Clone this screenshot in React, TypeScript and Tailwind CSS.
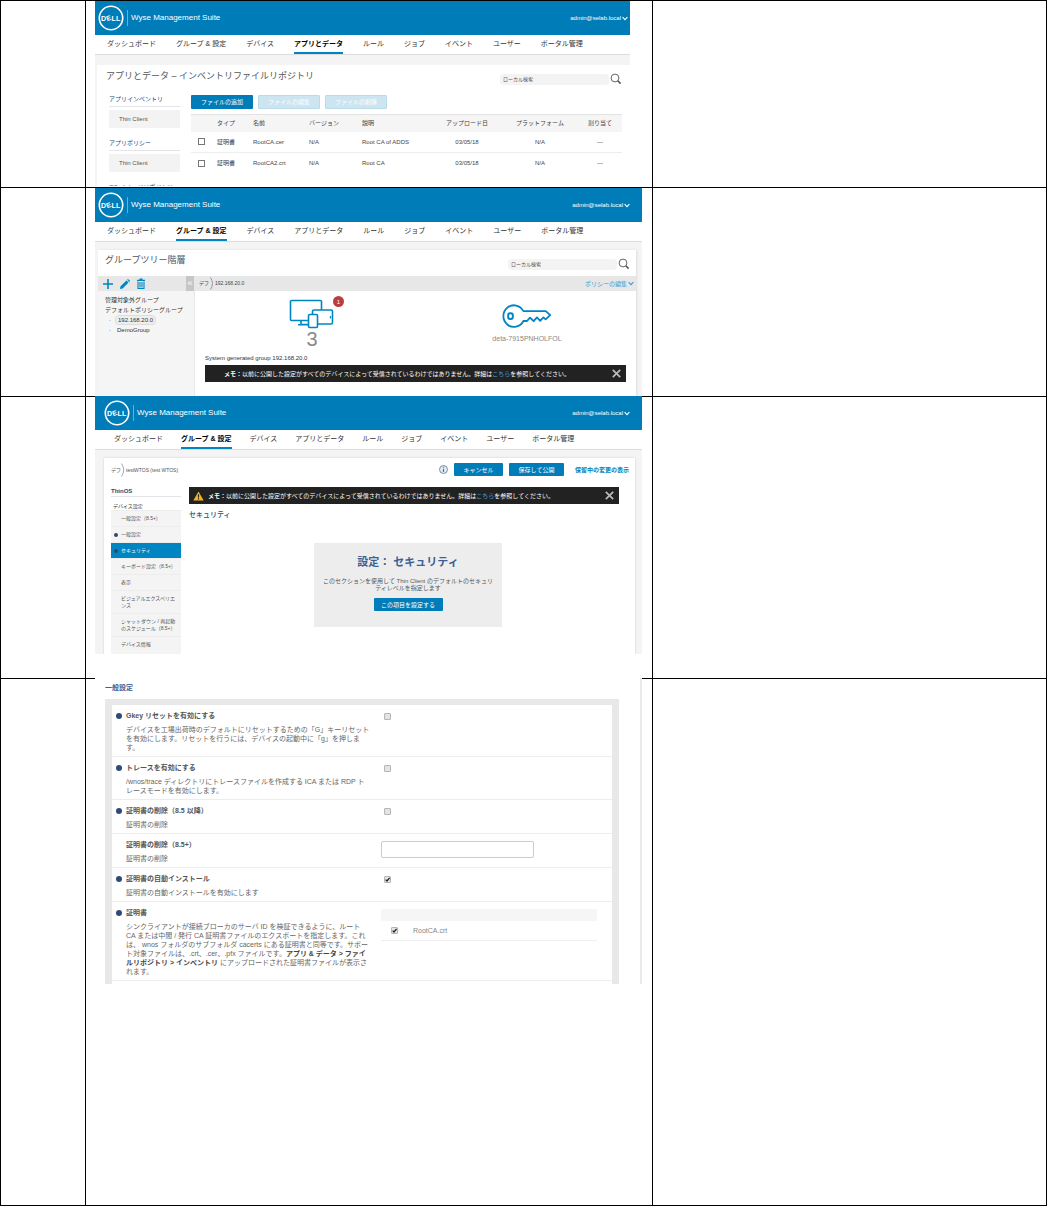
import { useState, type ReactNode } from 'react';
import clsx from 'clsx';

const NAV_ITEMS = [
  'ダッシュボード',
  'グループ & 設定',
  'デバイス',
  'アプリとデータ',
  'ルール',
  'ジョブ',
  'イベント',
  'ユーザー',
  'ポータル管理',
];

const FILES = [
  { name: 'RootCA.cer', description: 'Root CA of ADDS' },
  { name: 'RootCA2.crt', description: 'Root CA' },
];

const SECTIONS = [
  { label: '一般設定（8.5+）' },
  { label: '一般設定', dot: true },
  { label: 'セキュリティ', dot: true, active: true },
  { label: 'キーボード設定（8.5+）' },
  { label: '表示' },
  { label: 'ビジュアルエクスペリエンス' },
  { label: 'シャットダウン / 再起動のスケジュール（8.5+）' },
  { label: 'デバイス情報' },
];

function DellLogo() {
  return (
    <svg width="26" height="26" viewBox="0 0 26 26" fill="none" className="shrink-0">
      <circle cx="13" cy="13" r="11.7" stroke="#fff" strokeWidth="1.6" />
      <g fill="#fff" fontFamily="Liberation Sans, sans-serif" fontWeight="bold" fontSize="7">
        <text x="3" y="15.5">D</text>
        <text x="8.2" y="15.5" transform="rotate(-20 10.7 13)">E</text>
        <text x="13.6" y="15.5">L</text>
        <text x="18" y="15.5">L</text>
      </g>
    </svg>
  );
}

function Chevron({ className }: { className?: string }) {
  return (
    <svg width="6" height="5" viewBox="0 0 6 5" fill="none" className={className}>
      <path d="M0.6 1.2 L3 3.6 L5.4 1.2" stroke="currentColor" strokeWidth="1.1" />
    </svg>
  );
}

function TopBar({ active, wide = true, indent = false }: { active: string; wide?: boolean; indent?: boolean }) {
  return (
    <>
      <header
        className={clsx(
          'flex h-[34px] shrink-0 items-center justify-between bg-[#007db8] text-white',
          indent ? 'pl-[9px]' : 'pl-[3px]',
          wide ? 'pr-3' : 'pr-[2px]'
        )}
      >
        <div className="flex items-center">
          <DellLogo />
          <span className="ml-[3px] h-4 w-px bg-white/40" />
          <span className="ml-[3px] text-[8px] leading-none">Wyse Management Suite</span>
        </div>
        <button className="flex items-center gap-px text-[6px] leading-none">
          admin@selab.local <Chevron />
        </button>
      </header>
      <nav
        className={clsx(
          'flex h-5 shrink-0 border-b border-[#dcdcdc] bg-white text-[7px] leading-none whitespace-nowrap text-[#333]',
          indent ? 'gap-[18px] pl-[19px]' : 'gap-5 pl-3'
        )}
      >
        {NAV_ITEMS.map((item) => (
          <a
            key={item}
            href="#"
            className={clsx(
              'flex items-center border-b-2',
              item === active ? 'border-[#0085c3] font-bold text-black' : 'border-transparent'
            )}
          >
            {item}
          </a>
        ))}
      </nav>
    </>
  );
}

function SearchField() {
  return (
    <div className="flex items-center gap-px">
      <input
        type="search"
        aria-label="ローカル検索"
        placeholder="ローカル検索"
        className="h-[11px] w-[109px] rounded-sm bg-[#f3f3f3] px-[3px] text-[5px] leading-none placeholder:text-[#555]"
      />
      <svg width="12" height="12" viewBox="0 0 12 12" fill="none" stroke="#555" className="shrink-0">
        <circle cx="5" cy="5" r="3.9" strokeWidth="0.9" />
        <path d="M7.8 7.8 L10.6 10.6" strokeWidth="1.6" />
      </svg>
    </div>
  );
}

function Button({ children, disabled = false, className }: { children: ReactNode; disabled?: boolean; className?: string }) {
  return (
    <button
      disabled={disabled}
      className={clsx(
        'flex items-center justify-center rounded-[1px] text-[6px] leading-none text-white',
        disabled ? 'border border-[#b9dbea] bg-[#cce5f1]' : 'bg-[#007db8]',
        className
      )}
    >
      {children}
    </button>
  );
}

function Tick({ id, defaultChecked = false }: { id: string; defaultChecked?: boolean }) {
  const [checked, setChecked] = useState(defaultChecked);
  return (
    <span className="relative flex size-[7px]">
      <input
        id={id}
        type="checkbox"
        checked={checked}
        onChange={(e) => setChecked(e.target.checked)}
        className="size-[7px] appearance-none rounded-[1px] border border-[#b5b5b5] bg-[#e4e4e4]"
      />
      {checked && (
        <svg viewBox="0 0 7 7" fill="none" className="pointer-events-none absolute inset-0">
          <path d="M1.6 3.6 L3 5 L5.6 1.8" stroke="#222" strokeWidth="1.3" />
        </svg>
      )}
    </span>
  );
}

function Notice({ warning = false }: { warning?: boolean }) {
  return (
    <div className="flex h-[17px] items-center bg-[#222] pr-[5px] pl-1 text-[6px] leading-none whitespace-nowrap text-white">
      <span className="w-[15px]">
        {warning && (
          <svg width="11" height="10" viewBox="0 0 11 10">
            <path d="M5.5 0.4 L10.7 9.6 H0.3 Z" fill="#f4b223" />
            <path d="M5.5 3.2 V6.4 M5.5 7.2 V8.5" stroke="#222" strokeWidth="1.1" />
          </svg>
        )}
      </span>
      <p>
        <b>メモ：</b>以前に公開した設定がすべてのデバイスによって受信されているわけではありません。詳細は
        <a href="#" className="text-[#4a9bd6]">
          こちら
        </a>
        を参照してください。
      </p>
      <button aria-label="閉じる" className="ml-auto">
        <svg width="9" height="9" viewBox="0 0 9 9" stroke="#bbb" strokeWidth="1.7">
          <path d="M0.8 0.8 L8.2 8.2 M8.2 0.8 L0.8 8.2" />
        </svg>
      </button>
    </div>
  );
}

function SideGroup({ title, item }: { title: string; item?: string }) {
  return (
    <section className="mb-[11px]">
      <h3 className="border-b border-[#e3e3ea] pb-[3px] text-[6px] leading-[8px] text-[#1f497d]">{title}</h3>
      {item && (
        <a href="#" className="mt-[3px] flex h-[18px] items-center bg-[#f3f3f3] pl-[10px] text-[6px] leading-none text-[#555]">
          {item}
        </a>
      )}
    </section>
  );
}

function InventoryScreen() {
  return (
    <div className="flex h-[185px] flex-col overflow-hidden bg-[#f4f4f4]">
      <TopBar active="アプリとデータ" wide={false} />
      <main className="mt-[10px] ml-[2px] grow bg-white pr-2 pl-[9px]">
        <div className="flex h-[26px] items-start justify-between pt-[6px]">
          <h2 className="text-[9px] leading-[11px] text-[#555]">アプリとデータ – インベントリファイルリポジトリ</h2>
          <div className="pt-[2px]">
            <SearchField />
          </div>
        </div>
        <div className="flex gap-[11px] pl-[3px]">
          <aside className="w-[71px] shrink-0 pt-1">
            <SideGroup title="アプリインベントリ" item="Thin Client" />
            <SideGroup title="アプリポリシー" item="Thin Client" />
            <SideGroup title="OS イメージリポジトリ" />
          </aside>
          <div className="grow pt-1">
            <div className="flex gap-[5px]">
              <Button className="h-[14px] w-[62px]">ファイルの追加</Button>
              <Button disabled className="h-[14px] w-[62px]">
                ファイルの編集
              </Button>
              <Button disabled className="h-[14px] w-[62px]">
                ファイルの削除
              </Button>
            </div>
            <table className="mt-[5px] w-full table-fixed text-left text-[6px] leading-none whitespace-nowrap text-[#444]">
              <thead>
                <tr className="h-[17px] border-t border-[#e3e3e3] bg-[#f5f5f5]">
                  <th className="w-[26px]" aria-label="選択" />
                  <th className="w-9 font-normal">タイプ</th>
                  <th className="w-14 font-normal">名前</th>
                  <th className="w-[53px] font-normal">バージョン</th>
                  <th className="w-[70px] font-normal">説明</th>
                  <th className="w-[70px] text-center font-normal">アップロード日</th>
                  <th className="text-center font-normal">プラットフォーム</th>
                  <th className="w-11 text-center font-normal">割り当て</th>
                </tr>
              </thead>
              <tbody>
                {FILES.map((file) => (
                  <tr key={file.name} className="h-[21px] border-b border-[#eee] last:border-b-0">
                    <td className="pl-[7px]">
                      <input
                        type="checkbox"
                        aria-label={file.name}
                        className="block size-[7px] appearance-none border border-[#777] bg-white"
                      />
                    </td>
                    <td>証明書</td>
                    <td>{file.name}</td>
                    <td>N/A</td>
                    <td>{file.description}</td>
                    <td className="text-center">03/05/18</td>
                    <td className="text-center">N/A</td>
                    <td className="text-center">—</td>
                  </tr>
                ))}
              </tbody>
            </table>
          </div>
        </div>
      </main>
    </div>
  );
}

function DevicesIcon() {
  return (
    <svg width="46" height="30" viewBox="0 0 46 30" fill="#fff" stroke="#0085c3" strokeWidth="1.6">
      <rect x="1.5" y="1.5" width="31" height="20" rx="1" />
      <path d="M12 22 V25.5 H21 M9 25.8 H20" fill="none" />
      <rect x="23.5" y="11" width="20" height="14" rx="1.5" />
      <rect x="19.5" y="15.5" width="9" height="13" rx="1.2" />
      <path d="M41.5 17 V19.5" strokeWidth="1.2" />
    </svg>
  );
}

function KeyIcon() {
  return (
    <svg width="50" height="25" viewBox="0 0 50 25" fill="none" stroke="#0085c3" strokeWidth="1.8">
      <path
        d="M21.4 7.2 A10.6 10.8 0 1 0 21.4 17 L25 17 L28 13.6 L31.6 17.2 L35 13.4 L38.2 16.8 L41.4 13.4 L43.6 15.4 L48.2 11.2 L43.8 7.2 Z"
        strokeLinejoin="round"
      />
      <rect x="6.2" y="9.2" width="4.6" height="5.8" rx="2" strokeWidth="2" />
    </svg>
  );
}

function GroupScreen() {
  return (
    <div className="flex h-[208px] flex-col overflow-hidden bg-[#f4f4f4]">
      <TopBar active="グループ & 設定" />
      <main className="mt-2 mr-[6px] ml-[3px] flex grow flex-col bg-white shadow-[1px_0_2px_#ddd]">
        <div className="flex h-[26px] items-start justify-between pt-[5px] pr-[6px] pl-[7px]">
          <h2 className="text-[9px] leading-[11px] text-[#555]">グループツリー階層</h2>
          <div className="pt-[3px]">
            <SearchField />
          </div>
        </div>
        <div className="flex grow">
          <aside className="flex w-[97px] shrink-0 flex-col border-r border-[#e7e7e7] bg-[#f5f5f5]">
            <div className="flex h-[15px] items-center bg-[#e7e7e7] pl-1 text-[#0085c3]">
              <button aria-label="追加">
                <svg width="12" height="12" viewBox="0 0 12 12" stroke="currentColor" strokeWidth="1.6">
                  <path d="M6 1 V11 M1 6 H11" />
                </svg>
              </button>
              <button aria-label="編集" className="ml-[5px]">
                <svg width="12" height="12" viewBox="0 0 12 12" fill="currentColor">
                  <path d="M1 11 L1.4 8.4 L7.4 2.4 L9.6 4.6 L3.6 10.6 Z M8.1 1.7 L9 0.9 L11.1 3 L10.3 3.9 Z" />
                </svg>
              </button>
              <button aria-label="削除" className="ml-[5px]">
                <svg width="10" height="12" viewBox="0 0 10 12" fill="none" stroke="currentColor">
                  <path d="M1 2.3 H9 M3.5 1.2 H6.5" strokeWidth="1.2" />
                  <path d="M2 3.6 V10.5 H8 V3.6 M4 4 V9.6 M6 4 V9.6" strokeWidth="1.1" />
                </svg>
              </button>
              <button
                aria-label="折りたたむ"
                className="ml-auto flex h-full w-[8px] items-center justify-center bg-[#c6c6c6] text-[9px] leading-none text-white"
              >
                «
              </button>
            </div>
            <ul className="pt-1 pl-[7px] text-[6px] leading-[10px] whitespace-nowrap text-[#333]">
              <li>管理対象外グループ</li>
              <li>デフォルトポリシーグループ</li>
              <li className="flex items-center gap-1 pl-1">
                · <span className="rounded-sm border border-[#ddd] bg-[#eee] px-[2px] leading-[8px]">192.168.20.0</span>
              </li>
              <li className="flex gap-[6px] pl-1">
                · <span>DemoGroup</span>
              </li>
            </ul>
          </aside>
          <div className="flex min-w-0 grow flex-col">
            <div className="flex h-[15px] items-center bg-[#e7e7e7] pr-[2px] pl-1 leading-none text-[#444]">
              <span className="text-[5px]">デフ</span>
              <svg width="6" height="13" viewBox="0 0 6 13" fill="none" stroke="#999">
                <path d="M1.5 0.5 Q5.5 6.5 1.5 12.5" />
              </svg>
              <span className="text-[5px]">192.168.20.0</span>
              <a href="#" className="ml-auto flex items-center gap-px text-[6px] text-[#3d97d3]">
                ポリシーの編集 <Chevron />
              </a>
            </div>
            <div className="flex pt-2">
              <div className="flex w-[234px] flex-col items-center">
                <div className="relative">
                  <DevicesIcon />
                  <span className="absolute -top-[3px] -right-[9px] flex size-[11px] items-center justify-center rounded-full bg-[#b93e42] text-[6px] leading-none text-white">
                    1
                  </span>
                </div>
                <span className="text-[20px] leading-5 text-[#888]">3</span>
              </div>
              <div className="flex w-[196px] flex-col items-center pt-[5px]">
                <KeyIcon />
                <span className="mt-[6px] text-[7px] leading-[8px] text-[#888]">deta-7915PNHOLFOL</span>
              </div>
            </div>
            <div className="pr-[10px] pl-[10px]">
              <p className="pt-[5px] pb-[3px] text-[6px] leading-[8px] text-[#333]">System generated group 192.168.20.0</p>
              <Notice />
            </div>
          </div>
        </div>
      </main>
    </div>
  );
}

function SecurityScreen() {
  return (
    <div className="relative -mt-px flex h-[258px] flex-col overflow-hidden bg-[#f4f4f4]">
      <TopBar active="グループ & 設定" indent />
      <main className="mt-2 mr-[7px] ml-[9px] flex grow flex-col bg-white pr-[6px] pl-[7px] shadow-[0_0_2px_#ccc]">
        <div className="flex h-[29px] items-start pt-[5px]">
          <div className="flex items-center text-[5px] leading-none text-[#555]">
            <span>デフ</span>
            <svg width="5" height="14" viewBox="0 0 5 14" fill="none" stroke="#aaa">
              <path d="M0.5 0.5 Q5 7 0.5 13.5" />
            </svg>
            <span>testWTOS (test WTOS)</span>
          </div>
          <div className="ml-auto flex items-center">
            <svg width="9" height="9" viewBox="0 0 9 9" fill="none" stroke="#557a99" className="mr-[6px]">
              <circle cx="4.5" cy="4.5" r="4" fill="#e8eef3" strokeWidth="0.8" />
              <path d="M4.5 1.8 V2.8 M4.5 3.8 V7" strokeWidth="1.3" />
            </svg>
            <Button className="mr-[6px] h-[13px] w-[49px]">キャンセル</Button>
            <Button className="mr-[11px] h-[13px] w-[55px]">保存して公開</Button>
            <a href="#" className="text-[6px] leading-none font-bold text-[#007db8]">
              保留中の変更の表示
            </a>
          </div>
        </div>
        <div className="flex gap-2">
          <aside className="w-[70px] shrink-0">
            <h3 className="border-b border-[#e3e3ea] pb-px text-[6px] leading-[8px] font-bold text-[#1f497d]">ThinOS</h3>
            <p className="pt-[5px] pl-[2px] text-[5px] leading-[8px] text-[#333]">デバイス設定</p>
            <ul className="bg-[#f4f4f4] pb-1 text-[5px] leading-[7px]">
              {SECTIONS.map((s) => (
                <li key={s.label} className="border-t border-[#ededed]">
                  <a
                    href="#"
                    className={clsx(
                      'flex min-h-[15px] items-center py-1 pl-[3px]',
                      s.active ? 'bg-[#0085c3] text-white' : 'text-[#555]'
                    )}
                  >
                    <span className={clsx('mr-[3px] size-1 shrink-0 rounded-full', s.dot && 'bg-[#33476b]')} />
                    <span className="w-14 break-all">{s.label}</span>
                  </a>
                </li>
              ))}
            </ul>
          </aside>
          <div className="min-w-0 grow pr-[10px]">
            <Notice warning />
            <h2 className="mt-[6px] text-[7px] leading-[9px] font-medium text-[#1f497d]">セキュリティ</h2>
            <div className="flex justify-center pt-6 pl-2">
              <section className="flex h-[84px] w-[188px] flex-col items-center bg-[#ededed] pt-3">
                <h4 className="text-[11px] leading-[14px] font-bold text-[#3c5f94]">設定： セキュリティ</h4>
                <p className="mt-[9px] w-[174px] text-center text-[6px] leading-[7px] text-[#555]">
                  このセクションを使用して Thin Client のデフォルトのセキュリティレベルを指定します
                </p>
                <Button className="mt-[6px] h-[13px] w-[69px]">この項目を設定する</Button>
              </section>
            </div>
          </div>
        </div>
      </main>
    </div>
  );
}

function SettingRow({ title, description, dot = true, children }: { title: ReactNode; description: ReactNode; dot?: boolean; children: ReactNode }) {
  return (
    <div className="flex border-b border-[#ececec] pt-[7px] pb-1 pl-1">
      <span className={clsx('mt-px mr-1 size-[6px] shrink-0 rounded-full', dot && 'bg-[#2f4a76]')} />
      <div className="w-[245px] shrink-0 text-[7px] leading-[9px] text-[#555]">
        <div className="leading-[8px] font-bold">{title}</div>
        <div className="mt-[5px] text-[#666]">{description}</div>
      </div>
      <div className="min-w-0 grow pr-[15px] pl-[10px]">{children}</div>
    </div>
  );
}

function GeneralScreen() {
  return (
    <div className="relative -mt-px h-[306px] overflow-hidden border-r-2 border-[#eaeaea] bg-white pr-[21px] pl-[10px]">
      <h2 className="pt-[5px] text-[7px] leading-[9px] font-bold text-[#3c5f94]">一般設定</h2>
      <div className="mt-[7px] h-[285px] border-x-[7px] border-t-[6px] border-[#e8e8e8]">
        <SettingRow
          title={<label htmlFor="gkey">Gkey リセットを有効にする</label>}
          description="デバイスを工場出荷時のデフォルトにリセットするための「G」キーリセットを有効にします。リセットを行うには、デバイスの起動中に「g」を押します。"
        >
          <div className="px-[3px] pt-px">
            <Tick id="gkey" />
          </div>
        </SettingRow>
        <SettingRow
          title={<label htmlFor="trace">トレースを有効にする</label>}
          description="/wnos/trace ディレクトリにトレースファイルを作成する ICA または RDP トレースモードを有効にします。"
        >
          <div className="px-[3px] pt-px">
            <Tick id="trace" />
          </div>
        </SettingRow>
        <SettingRow title={<label htmlFor="delete-certs">証明書の削除（8.5 以降）</label>} description="証明書の削除">
          <div className="px-[3px] pt-px">
            <Tick id="delete-certs" />
          </div>
        </SettingRow>
        <SettingRow dot={false} title={<label htmlFor="delete-names">証明書の削除（8.5+）</label>} description="証明書の削除">
          <input id="delete-names" type="text" className="block h-[17px] w-[153px] rounded-[2px] border border-[#ccc] px-1 text-[7px]" />
        </SettingRow>
        <SettingRow
          title={<label htmlFor="auto-install">証明書の自動インストール</label>}
          description="証明書の自動インストールを有効にします"
        >
          <div className="px-[3px] pt-px">
            <Tick id="auto-install" defaultChecked />
          </div>
        </SettingRow>
        <SettingRow
          title="証明書"
          description={
            <>
              シンクライアントが接続ブローカのサーバ ID を検証できるように、ルート CA または中間 / 発行 CA
              証明書ファイルのエクスポートを指定します。これは、 wnos フォルダのサブフォルダ cacerts
              にある証明書と同等です。サポート対象ファイルは、.crt、.cer、.pfx ファイルです。
              <b className="text-[#444]">アプリ & データ &gt; ファイルリポジトリ &gt; インベントリ</b>{' '}
              にアップロードされた証明書ファイルが表示されます。
            </>
          }
        >
          <div className="h-3 bg-[#f6f6f6]" />
          <div className="flex h-5 items-center gap-[15px] border-b border-[#eee] pl-[10px]">
            <Tick id="root-ca" defaultChecked />
            <label htmlFor="root-ca" className="text-[7px] leading-none text-[#888]">
              RootCA.crt
            </label>
          </div>
        </SettingRow>
      </div>
    </div>
  );
}

const ROWS = [
  { height: 'min-h-[187px]', pad: 'pr-[22px]', screen: <InventoryScreen /> },
  { height: 'min-h-[209px]', pad: 'pr-[10px]', screen: <GroupScreen /> },
  { height: 'min-h-[282px]', pad: 'pr-[10px]', screen: <SecurityScreen /> },
  { height: 'min-h-[527px]', pad: 'pr-[10px]', screen: <GeneralScreen /> },
];

export default function App() {
  return (
    <div
      lang="ja"
      className="border-r border-b border-black bg-white font-['Liberation_Sans','Noto_Sans_CJK_JP',sans-serif] text-black"
    >
      {ROWS.map((row, i) => (
        <div key={i} className={clsx('grid grid-cols-[85fr_567fr_394fr] border-t border-black', row.height)}>
          <div className="border-l border-black" />
          <div className={clsx('min-w-0 border-l border-black pl-[9px]', row.pad)}>{row.screen}</div>
          <div className="border-l border-black" />
        </div>
      ))}
    </div>
  );
}
